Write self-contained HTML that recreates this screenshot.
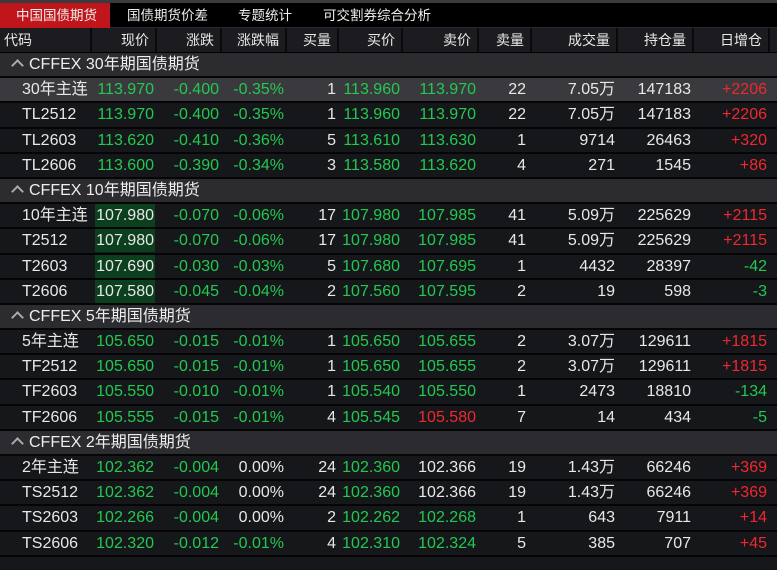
<!DOCTYPE html>
<html><head><meta charset="utf-8"><style>
*{margin:0;padding:0;box-sizing:border-box}
body{width:777px;height:570px;background:#16171b;font-family:"Liberation Sans","Noto Sans CJK SC",sans-serif;color:#e8e8e8;overflow:hidden;position:relative}
.top{height:3px;background:#3a3a3f}
.tabs{height:25px;background:#000;font-size:13.5px;line-height:25px;border-bottom:1px solid #2a2a2e;position:relative}
.tabs div{position:absolute;top:0;color:#eee}
.tabs .on{background:#c0161b;width:110px;left:0;padding-left:16px}
.hdr{height:25px;background:#1c1c20;display:flex;font-size:14px;line-height:24px;border-bottom:1px solid #000}
.hdr div{border-right:2px solid #0a0a0c;text-align:right;padding-right:6px}
.row{height:25.2px;display:flex;font-size:16px;line-height:24px;border-bottom:2px solid #050506;background:#16171b}
.row div{text-align:right;padding-right:3px;white-space:nowrap}
.hl{background:#3a3a3e!important}
.grp{height:25.2px;background:#2b2b30;border-bottom:2px solid #050506;font-size:16px;line-height:24px;padding-left:10px;color:#eee}
.grp span{display:inline-block;width:9px;height:9px;border-left:2px solid #aaa;border-top:2px solid #aaa;transform:rotate(45deg);margin:0 7px 0 3px;position:relative;top:1px}
.c0{width:92px}.c1{width:65px}.c2{width:65px}.c3{width:65px}.c4{width:52px}.c5{width:64px}.c6{width:76px}.c7{width:53px}.c8{width:86px}.c9{width:76px}.c10{width:76px}
.row .c0{text-align:left;padding-left:22px}
.hdr .c0{text-align:left;padding-left:4px}
.row .c7{padding-right:6px}
.g{color:#22c94f}.r{color:#f0282d}
.row .gb{padding:0 2px 0 3px}
.row .gb span{display:block;background:#0b3f1d;padding-right:1px;color:#e8e8e8;height:23px}
</style></head><body>
<div class="top"></div>
<div class="tabs"><div class="on">中国国债期货</div><div style="left:127px">国债期货价差</div><div style="left:238px">专题统计</div><div style="left:323px">可交割券综合分析</div></div>
<div class="hdr"><div class="c0">代码</div><div class="c1">现价</div><div class="c2">涨跌</div><div class="c3">涨跌幅</div><div class="c4">买量</div><div class="c5">买价</div><div class="c6">卖价</div><div class="c7">卖量</div><div class="c8">成交量</div><div class="c9">持仓量</div><div class="c10">日增仓</div></div>

<div class="grp"><span></span>CFFEX 30年期国债期货</div>
<div class="row hl"><div class="c0">30年主连</div><div class="c1 g">113.970</div><div class="c2 g">-0.400</div><div class="c3 g">-0.35%</div><div class="c4">1</div><div class="c5 g">113.960</div><div class="c6 g">113.970</div><div class="c7">22</div><div class="c8">7.05万</div><div class="c9">147183</div><div class="c10 r">+2206</div></div>
<div class="row"><div class="c0">TL2512</div><div class="c1 g">113.970</div><div class="c2 g">-0.400</div><div class="c3 g">-0.35%</div><div class="c4">1</div><div class="c5 g">113.960</div><div class="c6 g">113.970</div><div class="c7">22</div><div class="c8">7.05万</div><div class="c9">147183</div><div class="c10 r">+2206</div></div>
<div class="row"><div class="c0">TL2603</div><div class="c1 g">113.620</div><div class="c2 g">-0.410</div><div class="c3 g">-0.36%</div><div class="c4">5</div><div class="c5 g">113.610</div><div class="c6 g">113.630</div><div class="c7">1</div><div class="c8">9714</div><div class="c9">26463</div><div class="c10 r">+320</div></div>
<div class="row"><div class="c0">TL2606</div><div class="c1 g">113.600</div><div class="c2 g">-0.390</div><div class="c3 g">-0.34%</div><div class="c4">3</div><div class="c5 g">113.580</div><div class="c6 g">113.620</div><div class="c7">4</div><div class="c8">271</div><div class="c9">1545</div><div class="c10 r">+86</div></div>

<div class="grp"><span></span>CFFEX 10年期国债期货</div>
<div class="row"><div class="c0">10年主连</div><div class="c1 gb"><span>107.980</span></div><div class="c2 g">-0.070</div><div class="c3 g">-0.06%</div><div class="c4">17</div><div class="c5 g">107.980</div><div class="c6 g">107.985</div><div class="c7">41</div><div class="c8">5.09万</div><div class="c9">225629</div><div class="c10 r">+2115</div></div>
<div class="row"><div class="c0">T2512</div><div class="c1 gb"><span>107.980</span></div><div class="c2 g">-0.070</div><div class="c3 g">-0.06%</div><div class="c4">17</div><div class="c5 g">107.980</div><div class="c6 g">107.985</div><div class="c7">41</div><div class="c8">5.09万</div><div class="c9">225629</div><div class="c10 r">+2115</div></div>
<div class="row"><div class="c0">T2603</div><div class="c1 gb"><span>107.690</span></div><div class="c2 g">-0.030</div><div class="c3 g">-0.03%</div><div class="c4">5</div><div class="c5 g">107.680</div><div class="c6 g">107.695</div><div class="c7">1</div><div class="c8">4432</div><div class="c9">28397</div><div class="c10 g">-42</div></div>
<div class="row"><div class="c0">T2606</div><div class="c1 gb"><span>107.580</span></div><div class="c2 g">-0.045</div><div class="c3 g">-0.04%</div><div class="c4">2</div><div class="c5 g">107.560</div><div class="c6 g">107.595</div><div class="c7">2</div><div class="c8">19</div><div class="c9">598</div><div class="c10 g">-3</div></div>

<div class="grp"><span></span>CFFEX 5年期国债期货</div>
<div class="row"><div class="c0">5年主连</div><div class="c1 g">105.650</div><div class="c2 g">-0.015</div><div class="c3 g">-0.01%</div><div class="c4">1</div><div class="c5 g">105.650</div><div class="c6 g">105.655</div><div class="c7">2</div><div class="c8">3.07万</div><div class="c9">129611</div><div class="c10 r">+1815</div></div>
<div class="row"><div class="c0">TF2512</div><div class="c1 g">105.650</div><div class="c2 g">-0.015</div><div class="c3 g">-0.01%</div><div class="c4">1</div><div class="c5 g">105.650</div><div class="c6 g">105.655</div><div class="c7">2</div><div class="c8">3.07万</div><div class="c9">129611</div><div class="c10 r">+1815</div></div>
<div class="row"><div class="c0">TF2603</div><div class="c1 g">105.550</div><div class="c2 g">-0.010</div><div class="c3 g">-0.01%</div><div class="c4">1</div><div class="c5 g">105.540</div><div class="c6 g">105.550</div><div class="c7">1</div><div class="c8">2473</div><div class="c9">18810</div><div class="c10 g">-134</div></div>
<div class="row"><div class="c0">TF2606</div><div class="c1 g">105.555</div><div class="c2 g">-0.015</div><div class="c3 g">-0.01%</div><div class="c4">4</div><div class="c5 g">105.545</div><div class="c6 r">105.580</div><div class="c7">7</div><div class="c8">14</div><div class="c9">434</div><div class="c10 g">-5</div></div>

<div class="grp"><span></span>CFFEX 2年期国债期货</div>
<div class="row"><div class="c0">2年主连</div><div class="c1 g">102.362</div><div class="c2 g">-0.004</div><div class="c3">0.00%</div><div class="c4">24</div><div class="c5 g">102.360</div><div class="c6">102.366</div><div class="c7">19</div><div class="c8">1.43万</div><div class="c9">66246</div><div class="c10 r">+369</div></div>
<div class="row"><div class="c0">TS2512</div><div class="c1 g">102.362</div><div class="c2 g">-0.004</div><div class="c3">0.00%</div><div class="c4">24</div><div class="c5 g">102.360</div><div class="c6">102.366</div><div class="c7">19</div><div class="c8">1.43万</div><div class="c9">66246</div><div class="c10 r">+369</div></div>
<div class="row"><div class="c0">TS2603</div><div class="c1 g">102.266</div><div class="c2 g">-0.004</div><div class="c3">0.00%</div><div class="c4">2</div><div class="c5 g">102.262</div><div class="c6 g">102.268</div><div class="c7">1</div><div class="c8">643</div><div class="c9">7911</div><div class="c10 r">+14</div></div>
<div class="row"><div class="c0">TS2606</div><div class="c1 g">102.320</div><div class="c2 g">-0.012</div><div class="c3 g">-0.01%</div><div class="c4">4</div><div class="c5 g">102.310</div><div class="c6 g">102.324</div><div class="c7">5</div><div class="c8">385</div><div class="c9">707</div><div class="c10 r">+45</div></div>
</body></html>
